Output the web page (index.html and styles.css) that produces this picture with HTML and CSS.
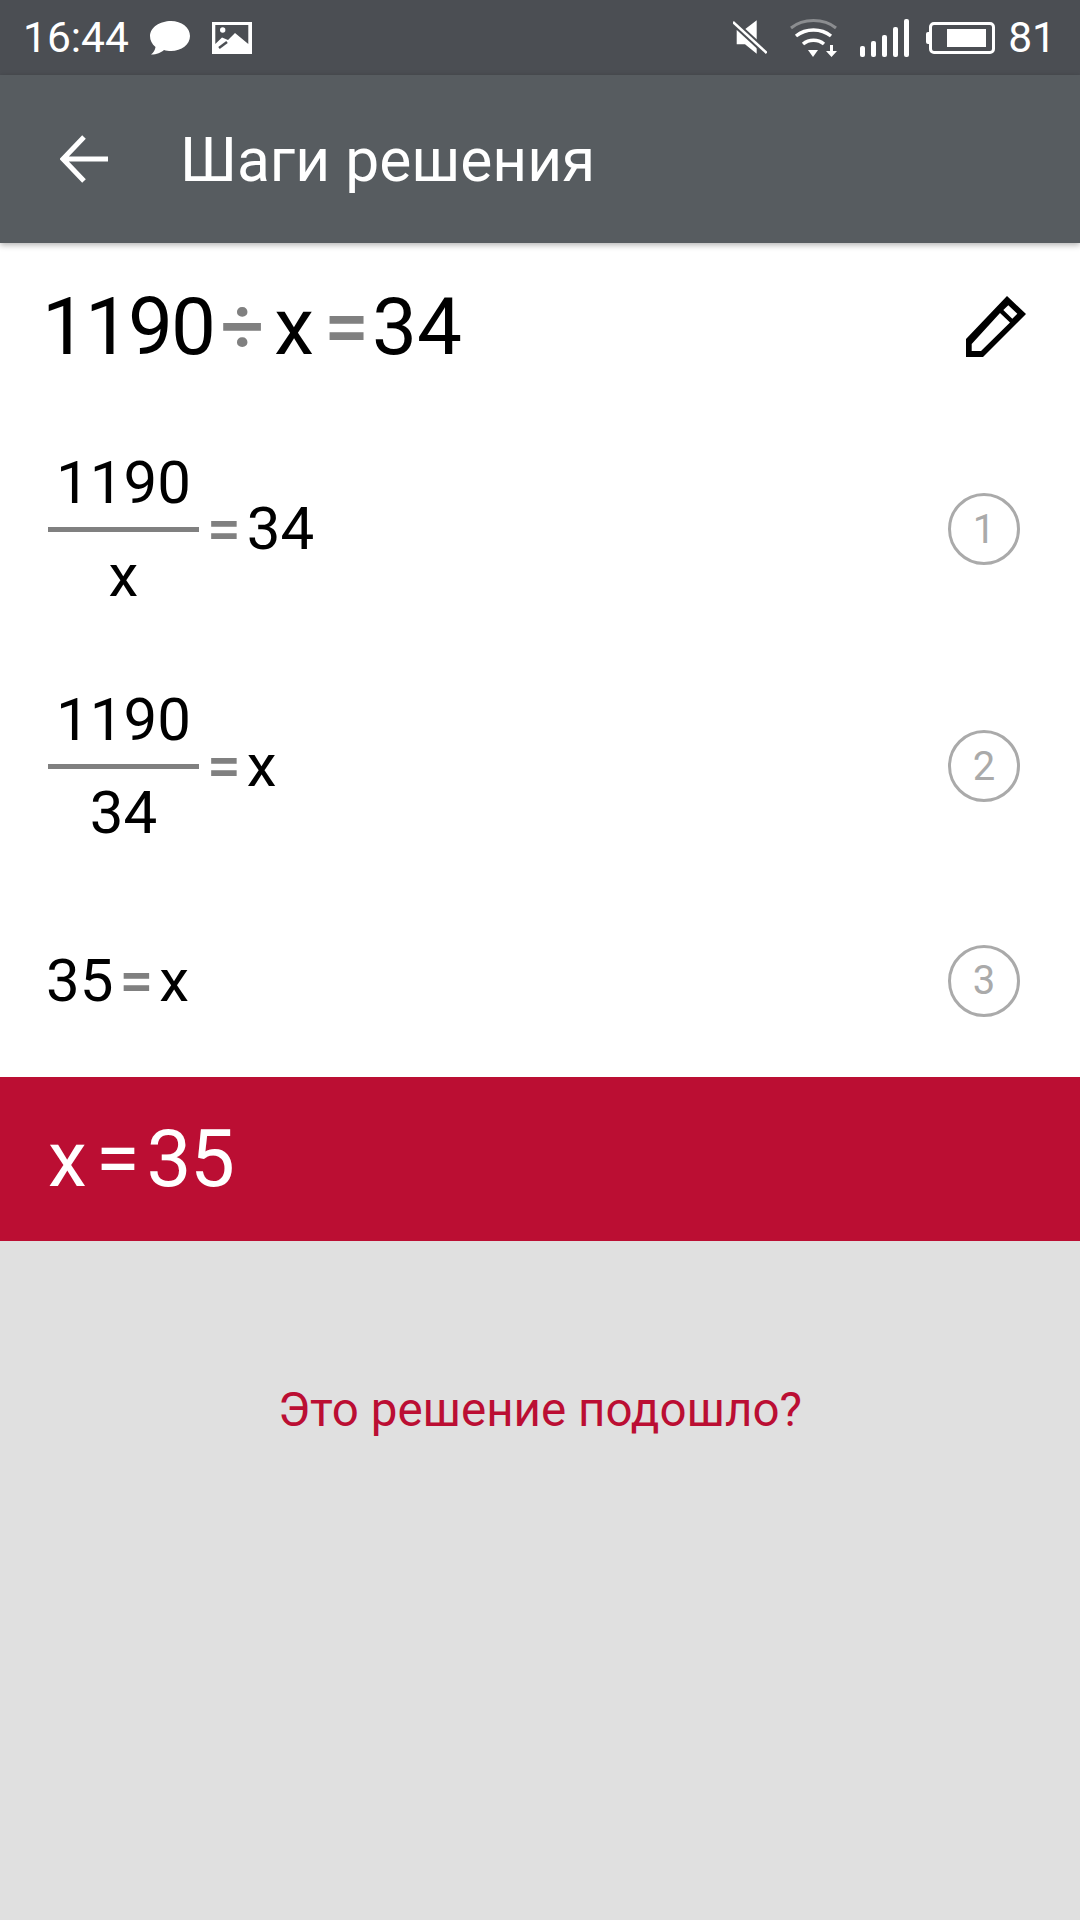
FILE: index.html
```html
<!DOCTYPE html>
<html lang="ru">
<head>
  <meta charset="UTF-8" />
  <title>Шаги решения</title>
  <meta name="viewport" content="width=device-width, initial-scale=1" />
  <link rel="stylesheet" href="styles.css">
</head>
<body>
  <div class="status-bar">
    <div class="status-left">
      <span class="status-text">16:44</span>
      <svg class="icon-chat" width="40" height="34" viewBox="0 0 40 34"><path d="M21 0C31.500 0 40 6.500 40 15C40 23.500 31.500 30 21 30C18.500 30 16 29.700 14 29C11 31.500 7 33.500 1 33.500C3.500 31.500 5 29 5.500 26C2 23.200 0 19.300 0 15C0 6.500 10 0 21 0Z" fill="#fff"/></svg>
      <svg class="icon-image" width="40" height="32" viewBox="0 0 40 32">
        <rect width="40" height="32" fill="#fff"/>
        <path d="M3.300 3H36.300V22L23 11L16 18L10 15.500L3.300 22Z" fill="#4b4e53"/>
        <circle cx="10.700" cy="8" r="2.700" fill="#fff"/>
        <path d="M7 26L15 20" stroke="#4b4e53" stroke-width="2.500"/>
      </svg>
    </div>
    <div class="status-right">
      <svg class="icon-mute" width="34" height="36" viewBox="0 0 34 36">
        <path d="M3.700 10H11L23.700 0.300V33.700L12 24.300H3.700Z" fill="#fff"/>
        <path d="M0 2L33.700 33" stroke="#4b4e53" stroke-width="6.500"/>
        <path d="M0 2L33.700 33" stroke="#fff" stroke-width="2.500"/>
      </svg>
      <svg class="icon-wifi" width="48" height="38" viewBox="0 0 48 38">
        <path d="M1 9C13 -1 34 -1 46 9" fill="none" stroke="#8b8d90" stroke-width="3"/>
        <path d="M6 17C16 9 31 9 41 17" fill="none" stroke="#fff" stroke-width="3.500"/>
        <path d="M13 25C19 20 28 20 34 25" fill="none" stroke="#fff" stroke-width="3.500"/>
        <path d="M18 31H28L23 38Z" fill="#fff"/>
        <path d="M40 26H43V32H47L41.500 38L36 32H40Z" fill="#fff"/>
      </svg>
      <div class="signal">
        <span class="signal-bar bar-1"></span>
        <span class="signal-bar bar-2"></span>
        <span class="signal-bar bar-3"></span>
        <span class="signal-bar bar-4"></span>
        <span class="signal-bar bar-5"></span>
      </div>
      <div class="battery"><span class="battery-level"></span></div>
      <span class="status-text">81</span>
    </div>
  </div>

  <header class="toolbar">
    <svg class="icon-back" width="48" height="48" viewBox="0 0 48 48"><path d="M48 24H4M24 2L3 24L24 46" fill="none" stroke="#fff" stroke-width="5"/></svg>
    <h1 class="toolbar-title">Шаги решения</h1>
  </header>

  <main class="steps">
    <div class="row row-head">
      <div class="expr expr-big">
        <span class="digits">1190</span><span class="op op-div">÷</span><span>x</span><span class="op">=</span><span>34</span>
      </div>
      <svg class="icon-edit" width="60" height="61" viewBox="0 0 60 61">
        <path fill-rule="evenodd" d="M41 0L60 18L17 61H0V43ZM5.700 48V55H15L44 26.500L34 17ZM37.300 14L46.300 22.700L51.300 17.700L42.300 9.300Z" fill="#000"/>
      </svg>
    </div>

    <div class="row row-step1">
      <div class="expr">
        <div class="fraction"><span class="num">1190</span><span class="den">x</span></div>
        <span class="op">=</span><span>34</span>
      </div>
      <div class="step-num">1</div>
    </div>

    <div class="row row-step2">
      <div class="expr">
        <div class="fraction"><span class="num">1190</span><span class="den">34</span></div>
        <span class="op">=</span><span>x</span>
      </div>
      <div class="step-num">2</div>
    </div>

    <div class="row row-step3">
      <div class="expr">
        <span>35</span><span class="op">=</span><span>x</span>
      </div>
      <div class="step-num">3</div>
    </div>
  </main>

  <div class="answer">
    <span class="answer-x">x</span><span class="answer-eq">=</span><span class="answer-num">35</span>
  </div>

  <div class="feedback">
    <span class="feedback-text">Это решение подошло?</span>
  </div>
</body>
</html>
```

FILE: styles.css
```css
*, *::before, *::after { box-sizing: border-box; }
html, body {
  height: 100%;
}
body {
  display: flex;
  flex-direction: column;
  margin: 0;
  background: #e0e0e0;
  font-family: Roboto, 'Noto Sans', sans-serif;
  color: #000;
}
svg {
  display: block;
  flex: none;
}

/* status bar */
.status-bar {
  display: flex;
  justify-content: space-between;
  align-items: center;
  height: 75px;
  padding: 0 24px 0 23px;
  background: #4b4e53;
}
.status-left, .status-right {
  display: flex;
  align-items: center;
}
.status-text {
  font-size: 42.500px;
  line-height: 75px;
  color: #fff;
}
.icon-chat {
  margin-left: 21px;
}
.icon-image {
  margin-left: 22px;
}
.icon-wifi {
  margin-left: 23px;
}
.signal {
  display: flex;
  align-items: flex-end;
  gap: 6px;
  height: 38px;
  margin-left: 22px;
}
.signal-bar {
  width: 5px;
  background: #fff;
  border-radius: 2px;
}
.bar-1 { height: 11px; }
.bar-2 { height: 16px; }
.bar-3 { height: 22px; }
.bar-4 { height: 30px; }
.bar-5 { height: 38px; }
.battery {
  position: relative;
  width: 66px;
  height: 32px;
  margin-left: 20px;
  padding: 4px 6px 4px 15px;
  border: 3px solid #fff;
  border-radius: 5px;
}
.battery::before {
  content: "";
  position: absolute;
  left: -6px;
  top: 7px;
  width: 3px;
  height: 12px;
  background: #fff;
  border-radius: 2px 0 0 2px;
}
.battery-level {
  display: block;
  height: 100%;
  background: #fff;
}
.status-right .status-text {
  margin-left: 13px;
}

/* toolbar */
.toolbar {
  position: relative;
  display: flex;
  align-items: center;
  height: 168px;
  padding-left: 60px;
  background: #575c60;
  box-shadow: 0 2px 6px rgba(0,0,0,0.3);
}
.toolbar-title {
  margin: 3px 0 0 72px;
  font-size: 60.5px;
  font-weight: 400;
  color: #fff;
}

/* steps */
.steps {
  background: #fff;
}
.row {
  display: flex;
  justify-content: space-between;
  align-items: center;
  padding: 0 60px 0 48px;
}
.row-head { height: 167px; padding-left: 42px; padding-right: 54px; }
.row-step1 { height: 238px; }
.row-step2 { height: 236px; }
.row-step3 { height: 193px; padding-left: 46px; }
.expr {
  display: flex;
  align-items: center;
  font-size: 60px;
  line-height: 1;
}
.expr-big {
  font-size: 80px;
}
.digits {
  letter-spacing: -2px;
}
.op {
  margin: 0 6px;
  font-weight: 500;
  color: #808080;
}
.row-step1 .op, .row-step2 .op {
  margin: 0 6px 0 2px;
}
.expr-big .op {
  margin: 0 3px 0 10px;
}
.expr-big .op-div {
  margin: 0 10px 0 7px;
  font-size: 76px;
}
.fraction {
  display: flex;
  flex-direction: column;
  align-items: center;
  width: 151px;
  margin-right: 6px;
}
.num {
  width: 100%;
  padding-bottom: 14px;
  border-bottom: 5px solid #808080;
  text-align: center;
}
.den {
  padding-top: 14px;
}
.step-num {
  display: flex;
  justify-content: center;
  align-items: center;
  width: 72px;
  height: 72px;
  border: 3px solid #aaa;
  border-radius: 50%;
  font-size: 40px;
  color: #aaa;
}

/* answer */
.answer {
  display: flex;
  align-items: center;
  height: 164px;
  padding-left: 48px;
  background: #bb0e33;
  font-size: 80px;
  color: #fff;
}
.answer-x {
  font-size: 78px;
}
.answer-eq {
  margin: 0 7px 0 9px;
}
.answer-num {
  letter-spacing: -1.5px;
}

/* feedback */
.feedback {
  flex: 1;
  display: flex;
  justify-content: center;
  padding-top: 135px;
}
.feedback-text {
  font-size: 47.5px;
  line-height: 68px;
  color: #bb0e33;
}
```
